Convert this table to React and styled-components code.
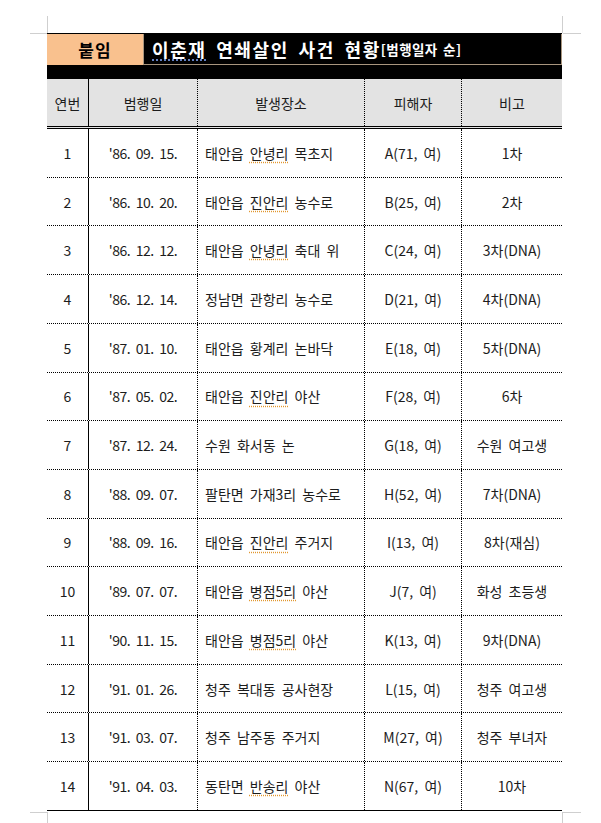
import React from 'react';
import styled, { createGlobalStyle } from 'styled-components'

const GlobalStyle = createGlobalStyle`
    html, body {
        margin: 0;
        padding: 0;
        background: #fff;
    }
    body {
        font-family: "Noto Sans CJK KR", "Noto Sans", sans-serif;
        color: #1c1c1c;
    }
`

const Page = styled.div`
    position: relative;
    width: 601px;
    height: 823px;
    padding: 33px 0 0 47px;
    box-sizing: border-box;
    overflow: hidden;
`

const Mark = styled.span`
    position: absolute;
    background: #cfcfcf;
    left: ${p => p.$x}px;
    top: ${p => p.$y}px;
    width: ${p => p.$w}px;
    height: ${p => p.$h}px;
`

const Sheet = styled.div`
    width: 515px;
    display: flex;
    flex-direction: column;
`

const TitleRow = styled.div`
    display: flex;
    height: 32px;
    border-top: 1px solid #000;
    box-sizing: border-box;
`

const Badge = styled.div`
    width: 96px;
    background: #f9c18e;
    display: flex;
    align-items: center;
    justify-content: center;
    font-size: 17px;
    font-weight: 700;
    color: #000;
    letter-spacing: 1px;
`

const Title = styled.div`
    flex: 1;
    background: #000;
    border: 1px solid #a8957e;
    border-top: none;
    display: flex;
    align-items: center;
    padding-left: 8px;
    color: #fff;
    font-size: 18px;
    font-weight: 700;
    letter-spacing: 1.6px;
    word-spacing: 4px;
    white-space: nowrap;
`

const TitleName = styled.span`
    text-decoration: underline dotted #6f8fd8;
    text-underline-offset: 3px;
`

const TitleSub = styled.span`
    font-size: 13.5px;
    font-weight: 700;
    letter-spacing: 0.4px;
    word-spacing: 2px;
`

const Band = styled.div`
    height: 14px;
    background: #000;
`

const Row = styled.div`
    display: grid;
    grid-template-columns: 42px 109px 167px 97px 100px;
    height: ${p => p.$head ? '50px' : '48.71px'};
    box-sizing: border-box;
    background: ${p => p.$head ? '#e3e3e3' : '#fff'};
    border-bottom: ${p => p.$head ? '3px double #000' : p.$last ? '1px solid #000' : '1px dotted #000'};
`

const Cell = styled.div`
    display: flex;
    align-items: center;
    justify-content: ${p => p.$left ? 'flex-start' : 'center'};
    padding-left: ${p => p.$left ? '7px' : '0'};
    font-size: 14px;
    white-space: nowrap;
    word-spacing: 3px;
    letter-spacing: ${p => p.$tight ? '-0.5px' : '0'};
    box-sizing: border-box;
    border-right: ${p => p.$solid ? '1px solid #000' : p.$end ? 'none' : '1px dotted #000'};
`

const Spell = styled.span`
    text-decoration: underline dotted #e2972e;
    text-underline-offset: 3px;
`

const rows = [
    ['1', "'86. 09. 15.", ['태안읍 ', ['안녕리'], ' 목초지'], 'A(71, 여)', '1차'],
    ['2', "'86. 10. 20.", ['태안읍 ', ['진안리'], ' 농수로'], 'B(25, 여)', '2차'],
    ['3', "'86. 12. 12.", ['태안읍 ', ['안녕리'], ' 축대 위'], 'C(24, 여)', '3차(DNA)'],
    ['4', "'86. 12. 14.", ['정남면 관항리 농수로'], 'D(21, 여)', '4차(DNA)'],
    ['5', "'87. 01. 10.", ['태안읍 황계리 논바닥'], 'E(18, 여)', '5차(DNA)'],
    ['6', "'87. 05. 02.", ['태안읍 ', ['진안리'], ' 야산'], 'F(28, 여)', '6차'],
    ['7', "'87. 12. 24.", ['수원 화서동 논'], 'G(18, 여)', '수원 여고생'],
    ['8', "'88. 09. 07.", ['팔탄면 가재3리 농수로'], 'H(52, 여)', '7차(DNA)'],
    ['9', "'88. 09. 16.", ['태안읍 ', ['진안리'], ' 주거지'], 'I(13, 여)', '8차(재심)'],
    ['10', "'89. 07. 07.", ['태안읍 ', ['병점5리'], ' 야산'], 'J(7, 여)', '화성 초등생'],
    ['11', "'90. 11. 15.", ['태안읍 ', ['병점5리'], ' 야산'], 'K(13, 여)', '9차(DNA)'],
    ['12', "'91. 01. 26.", ['청주 복대동 공사현장'], 'L(15, 여)', '청주 여고생'],
    ['13', "'91. 03. 07.", ['청주 남주동 주거지'], 'M(27, 여)', '청주 부녀자'],
    ['14', "'91. 04. 03.", ['동탄면 ', ['반송리'], ' 야산'], 'N(67, 여)', '10차'],
]

const Place = ({ parts }) => (
    <span>
        {parts.map((p, i) => Array.isArray(p) ? <Spell key={i}>{p[0]}</Spell> : <React.Fragment key={i}>{p}</React.Fragment>)}
    </span>
)

const App = () => {
    return (
        <Page>
            <GlobalStyle />
            <Mark $x={47} $y={16} $w={1} $h={17} />
            <Mark $x={30} $y={33} $w={17} $h={1} />
            <Mark $x={562} $y={16} $w={1} $h={17} />
            <Mark $x={563} $y={33} $w={18} $h={1} />
            <Mark $x={47} $y={812} $w={1} $h={11} />
            <Mark $x={30} $y={812} $w={17} $h={1} />
            <Mark $x={562} $y={812} $w={1} $h={11} />
            <Mark $x={563} $y={812} $w={18} $h={1} />
            <Sheet>
                <TitleRow>
                    <Badge>붙임</Badge>
                    <Title>
                        <span><TitleName>이춘재</TitleName> 연쇄살인 사건 현황</span>
                        <TitleSub>[범행일자 순]</TitleSub>
                    </Title>
                </TitleRow>
                <Band />
                <Row $head>
                    <Cell $solid>연번</Cell>
                    <Cell>범행일</Cell>
                    <Cell>발생장소</Cell>
                    <Cell>피해자</Cell>
                    <Cell $end>비고</Cell>
                </Row>
                {rows.map((r, i) => (
                    <Row key={r[0]} $last={i === rows.length - 1}>
                        <Cell $solid>{r[0]}</Cell>
                        <Cell $tight>{r[1]}</Cell>
                        <Cell $left><Place parts={r[2]} /></Cell>
                        <Cell>{r[3]}</Cell>
                        <Cell $end>{r[4]}</Cell>
                    </Row>
                ))}
            </Sheet>
        </Page>
    );
};

export default App;
